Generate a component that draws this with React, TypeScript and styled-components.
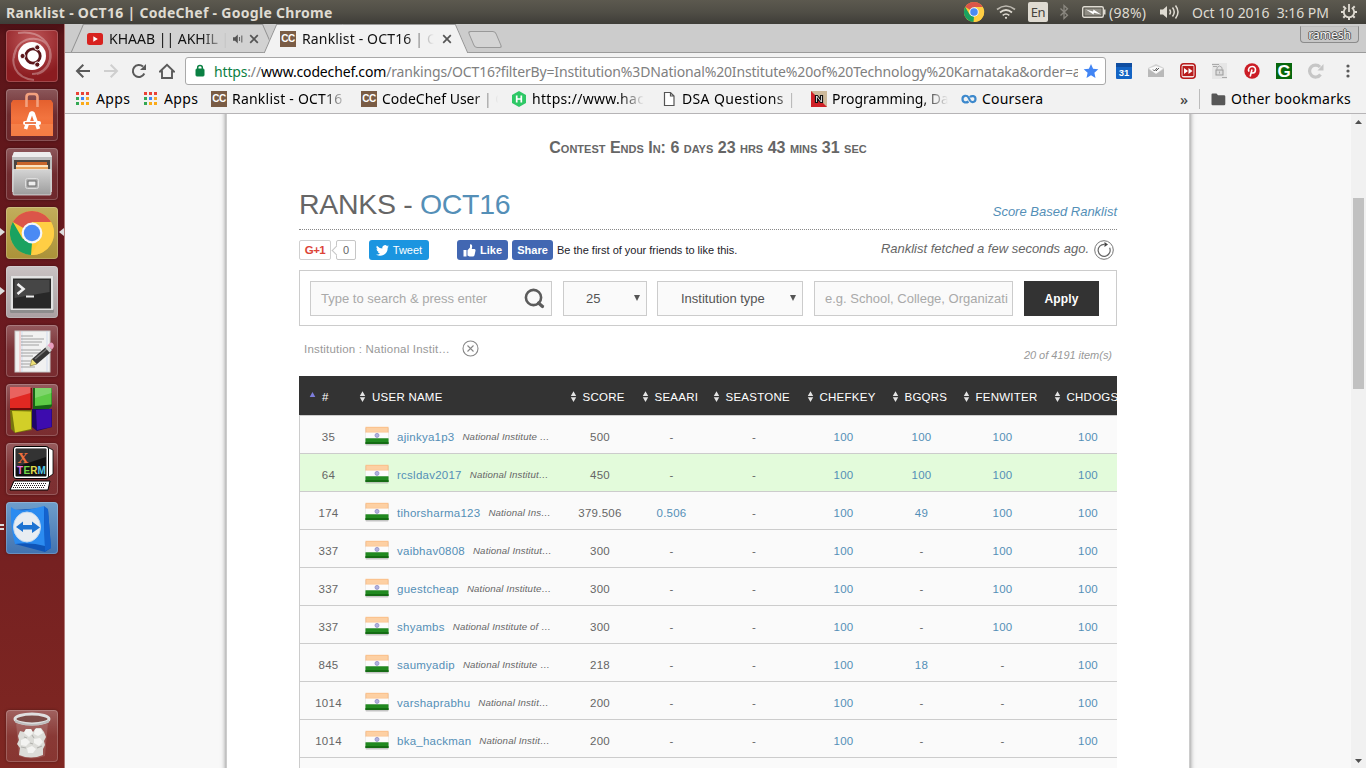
import React from "react";
import styled, { createGlobalStyle, css } from "styled-components";

const GlobalStyle = createGlobalStyle`
  * { box-sizing: border-box; }
  html, body { margin: 0; padding: 0; overflow: hidden; }
  svg { display: block; flex: none; }
`;

const ui = `"Noto Sans", "Open Sans", sans-serif`;
const arial = `"Liberation Sans", Arial, sans-serif`;

const Desktop = styled.div`
  width: 1366px;
  height: 768px;
  display: flex;
  flex-direction: column;
  overflow: hidden;
  font-family: ${ui};
`;

/* ---------- system panel ---------- */
const Panel = styled.header`
  height: 24px;
  flex: none;
  display: flex;
  align-items: center;
  justify-content: space-between;
  padding: 0 8px 0 6px;
  background: linear-gradient(#5c594f 0%, #504e46 50%, #3e3d38 100%);
  color: #dfdbd2;
  white-space: nowrap;
`;
const WindowTitle = styled.div`
  font-size: 14px;
  font-weight: 700;
  letter-spacing: 0.3px;
`;
const Indicators = styled.div`
  display: flex;
  align-items: center;
`;
const Indicator = styled.div<{ $w: number; $ls?: number }>`
  width: ${(p) => p.$w}px;
  flex: none;
  font-size: 14px;
  letter-spacing: ${(p) => p.$ls ?? 0}px;
`;
const Lang = styled.div`
  width: 20px;
  height: 20px;
  border-radius: 2px;
  background: #dfdbd2;
  color: #45433d;
  font-size: 13px;
  line-height: 20px;
  text-align: center;
  letter-spacing: -0.5px;
`;

/* ---------- launcher ---------- */
const Body = styled.div`
  flex: 1;
  display: flex;
  min-height: 0;
`;
const Launcher = styled.nav`
  width: 65px;
  flex: none;
  display: flex;
  flex-direction: column;
  gap: 7px;
  padding: 6px 6px 6px;
  background: linear-gradient(#4c1015 0, #5b1519 12px, #6d1b20 45%, #7f2722 100%);
  border-right: 1px solid #b07a78;
`;
const Tile = styled.div<{ $bg?: string; $last?: boolean }>`
  position: relative;
  width: 52px;
  height: 52px;
  flex: none;
  border-radius: 4px;
  background: ${(p) => p.$bg ?? "linear-gradient(rgba(255,255,255,.28), rgba(255,255,255,.09) 50%, rgba(255,255,255,.07))"};
  box-shadow: inset 0 0 0 1px rgba(255, 255, 255, 0.2), 0 0 3px rgba(0, 0, 0, 0.35);
  ${(p) => p.$last && css`margin-top: auto;`}
`;
const Pip = styled.i<{ $right?: boolean; $top?: number }>`
  position: absolute;
  top: ${(p) => p.$top ?? 21}px;
  ${(p) => (p.$right ? "right: -6px;" : "left: -6px;")}
  border: 4px solid transparent;
  ${(p) => (p.$right ? "border-right: 5px solid #ddd; border-left: 0;" : "border-left: 5px solid #ddd; border-right: 0;")}
`;
const Dash = styled.i<{ $top: number }>`
  position: absolute;
  left: -6px;
  top: ${(p) => p.$top}px;
  width: 4px;
  height: 2px;
  background: #ddd;
`;

/* ---------- browser chrome ---------- */
const Browser = styled.main`
  flex: 1;
  min-width: 0;
  display: flex;
  flex-direction: column;
  background: #f2f2f2;
`;
const TabStrip = styled.div`
  position: relative;
  height: 29px;
  flex: none;
  display: flex;
  padding-left: 12px;
  background: #ccc;
  border-bottom: 1px solid #9b9b9b;
`;
const Tab = styled.div<{ $active?: boolean }>`
  position: relative;
  width: 186px;
  height: ${(p) => (p.$active ? 29 : 28)}px;
  margin-right: 7px;
  display: flex;
  align-items: center;
  padding: 1px 4px 0 10px;
  z-index: ${(p) => (p.$active ? 2 : 1)};
  &::before, &::after {
    content: "";
    position: absolute;
    z-index: -1;
    top: 0;
    bottom: 0;
    width: 60%;
    background: ${(p) => (p.$active ? "#f2f2f2" : "#d2d2d2")};
    border-top: 1px solid #9b9b9b;
  }
  &::before { left: 0; border-left: 1.4px solid #8f8f8f; transform: skewX(-23.5deg); }
  &::after { right: -6px; border-right: 1.4px solid #8f8f8f; transform: skewX(23.5deg); }
`;
const TabTitle = styled.div<{ $w: number; $ls: number }>`
  width: ${(p) => p.$w}px;
  margin-left: 6px;
  font-size: 14px;
  line-height: 26px;
  letter-spacing: ${(p) => p.$ls}px;
  white-space: nowrap;
  overflow: hidden;
  color: #111;
  mask-image: linear-gradient(90deg, #000 78%, transparent 100%);
`;
const NewTab = styled.div`
  width: 28px;
  height: 17px;
  margin: 7px 0 0 8px;
  border: 1px solid #999;
  border-radius: 3px;
  background: #d4d4d4;
  transform: skewX(23deg);
`;
const Profile = styled.div`
  margin: 2px 7px 0 auto;
  width: 59px;
  height: 17px;
  border: 1px solid #8b8b8b;
  border-top-color: #bbb;
  border-radius: 0 0 4px 4px;
  background: #c6c6c6;
  color: #f4f4f4;
  font-size: 12.5px;
  line-height: 15px;
  letter-spacing: -0.3px;
  text-align: center;
  text-shadow: 1px 0 #555, -1px 0 #555, 0 1px #555, 0 -1px #555;
`;
const Toolbar = styled.div`
  height: 32px;
  flex: none;
  display: flex;
  align-items: center;
  padding: 4px 10px 0;
`;
const NavButtons = styled.div`
  display: flex;
  gap: 12px;
  margin-right: 10px;
`;
const Omnibox = styled.div`
  width: 921px;
  height: 28px;
  display: flex;
  align-items: center;
  padding: 0 6px 0 9px;
  border: 1px solid #a9a9a9;
  border-radius: 3px;
  background: #fff;
`;
const Url = styled.div`
  width: 864px;
  margin: 0 5px 0 9px;
  overflow: hidden;
  white-space: nowrap;
  font-size: 14px;
  letter-spacing: -0.16px;
  color: #808080;
  em { font-style: normal; color: #0b8043; }
  b { font-weight: 400; color: #000; }
`;
const Extensions = styled.div`
  display: flex;
  gap: 16px;
  margin-left: 10px;
`;
const BookmarkBar = styled.div`
  height: 29px;
  flex: none;
  display: flex;
  align-items: center;
  padding-left: 10px;
  border-bottom: 1px solid #b6b4b6;
`;
const Bookmark = styled.div<{ $w: number }>`
  width: ${(p) => p.$w}px;
  flex: none;
  display: flex;
  align-items: center;
  gap: 5px;
`;
const BookmarkLabel = styled.div<{ $fade?: boolean; $ls?: number }>`
  flex: 0 0 auto;
  overflow: hidden;
  white-space: nowrap;
  font-size: 14px;
  line-height: 20px;
  color: #000;
  letter-spacing: ${(p) => p.$ls ?? 0}px;
  ${(p) => p.$fade && css`max-width: 116px; mask-image: linear-gradient(90deg, #000 78%, transparent 100%);`}
`;
const More = styled.div`
  margin-left: 69px;
  width: 19px;
  font-size: 15px;
  font-weight: 500;
  color: #444;
  line-height: 20px;
`;
const OtherBookmarks = styled.div`
  display: flex;
  align-items: center;
  gap: 5px;
  padding-left: 11px;
  border-left: 1px solid #bcbcbc;
`;
const CCBadge = styled.span`
  width: 16px;
  height: 16px;
  flex: none;
  background: #7a5c45;
  color: #fff;
  font: 700 10px/15px ${arial};
  letter-spacing: -0.5px;
  text-align: center;
`;

/* ---------- page ---------- */
const Viewport = styled.div`
  flex: 1;
  min-height: 0;
  display: flex;
`;
const Canvas = styled.div`
  flex: 1;
  background: #f8f8f8;
  display: flex;
  justify-content: center;
  overflow: hidden;
`;
const Sheet = styled.div`
  width: 964px;
  height: 800px;
  margin-top: -10px;
  padding: 10px 72px 0;
  border: 1px solid #ccc;
  background: #fff;
  box-shadow: 0 0 5px #777;
  font-family: ${arial};
  color: #666;
`;
const Scrollbar = styled.div`
  width: 15px;
  display: flex;
  flex-direction: column;
  align-items: center;
  background: #f1f1f1;
  padding: 6px 0 5px;
`;
const Thumb = styled.div`
  width: 11px;
  height: 191px;
  margin: 74px 0 auto;
  background: #c1c1c1;
`;
const Countdown = styled.div`
  padding-top: 23px;
  height: 64px;
  font-size: 16px;
  line-height: 20px;
  font-weight: 700;
  font-variant: small-caps;
  text-align: center;
  white-space: nowrap;
`;
const TitleRow = styled.div`
  height: 51px;
  display: flex;
  justify-content: space-between;
  border-bottom: 1px dotted #888;
`;
const Title = styled.h1`
  margin: 8px 0 0;
  font-size: 28.500px;
  line-height: 34px;
  font-weight: 400;
  letter-spacing: -0.32px;
  white-space: nowrap;
  span { color: #548fb7; }
`;
const ScoreLink = styled.a`
  margin-top: 25px;
  font-size: 13px;
  line-height: 15px;
  font-style: italic;
  color: #548fb7;
`;
const SocialRow = styled.div`
  display: flex;
  height: 40px;
  padding-top: 10px;
  align-items: flex-start;
`;
const GPlus = styled.div`
  width: 32px;
  height: 20px;
  border: 1px solid #d0d0d0;
  border-radius: 2px;
  color: #dc4437;
  font: 700 11.5px/18px ${arial};
  letter-spacing: -0.6px;
  text-align: center;
`;
const GCount = styled.div`
  position: relative;
  width: 20px;
  height: 20px;
  margin: 0 13px 0 5px;
  border: 1px solid #c6c6c6;
  border-radius: 2px;
  font-size: 11px;
  line-height: 19px;
  text-align: center;
  &::before {
    content: "";
    position: absolute;
    left: -4px;
    top: 6px;
    width: 6px;
    height: 6px;
    background: #fff;
    border-left: 1px solid #c6c6c6;
    border-bottom: 1px solid #c6c6c6;
    transform: rotate(45deg);
  }
`;
const SocialButton = styled.div<{ $w: number; $bg: string; $mr: number; $bold?: boolean }>`
  width: ${(p) => p.$w}px;
  height: 20px;
  margin-right: ${(p) => p.$mr}px;
  display: flex;
  align-items: center;
  justify-content: center;
  gap: 4px;
  border-radius: 3px;
  background: ${(p) => p.$bg};
  color: #fff;
  font-size: 11px;
  font-weight: ${(p) => (p.$bold ? 700 : 400)};
  line-height: 20px;
`;
const SocialNote = styled.div`
  font-size: 11px;
  line-height: 21px;
  color: #1d2129;
  white-space: nowrap;
`;
const Fetched = styled.div`
  margin-left: auto;
  padding-right: 3px;
  display: flex;
  gap: 5px;
  font-size: 13px;
  line-height: 18px;
  font-style: italic;
  white-space: nowrap;
`;
const Filters = styled.div`
  height: 56px;
  display: grid;
  grid-template-columns: 242px 84px 145px 199px 75px;
  column-gap: 11px;
  padding: 10px;
  border: 1px solid #ccc;
`;
const Field = styled.div<{ $hint?: boolean; $wide?: boolean }>`
  height: 35px;
  display: flex;
  align-items: center;
  justify-content: space-between;
  padding: 0 6px 0 10px;
  border: 1px solid #ccc;
  background: #fafafa;
  font-size: 13px;
  white-space: nowrap;
  overflow: hidden;
  color: ${(p) => (p.$hint ? "#a9a9a9" : "#555")};
  ${(p) => p.$wide && css`margin-left: -1px;`}
`;
const Clip = styled.span`
  width: 183px;
  flex: none;
  overflow: hidden;
`;
const Choice = styled.span<{ $pl: number }>`
  padding-left: ${(p) => p.$pl}px;
`;
const Caret = styled.i`
  border: 3.5px solid transparent;
  border-top: 6px solid #555;
  border-bottom: 0;
  margin-top: -2px;
`;
const Apply = styled.div`
  height: 35px;
  background: #333;
  color: #fff;
  font: 700 12px/37px ${arial};
  letter-spacing: 0.15px;
  text-align: center;
`;
const Summary = styled.div`
  height: 50px;
  display: flex;
  justify-content: space-between;
  padding: 13px 5px 0 5px;
`;
const ActiveFilter = styled.div`
  display: flex;
  gap: 12px;
  font-size: 11.5px;
  line-height: 20px;
  color: #999;
  letter-spacing: 0.2px;
  svg { margin-top: 1px; }
`;
const ItemCount = styled.div`
  margin-top: 9px;
  font-size: 11px;
  line-height: 14px;
  font-style: italic;
  color: #999;
  letter-spacing: -0.03px;
`;
const Table = styled.div`
  width: 818px;
  overflow: hidden;
  font-size: 11.5px;
  letter-spacing: 0.25px;
`;
const gridRow = css`
  display: grid;
  grid-template-columns: 54px 210px 72px 71px 94px 85px 71px 91px 80px;
  width: 829px;
  align-items: center;
`;
const HeadRow = styled.div`
  ${gridRow}
  height: 39px;
  padding: 3px 0 0 1px;
  background: #333;
  color: #fff;
`;
const HeadCell = styled.div<{ $pl?: number }>`
  display: flex;
  align-items: center;
  gap: 6px;
  padding-left: ${(p) => p.$pl ?? 5.5}px;
  white-space: nowrap;
  svg { margin-top: -1px; }
`;
const BodyRows = styled.div`
  width: 829px;
  border-left: 1px solid #ccc;
  border-top: 1px solid #ccc;
`;
const Row = styled.div<{ $mine?: boolean }>`
  ${gridRow}
  height: 38px;
  padding-top: 4px;
  border-bottom: 1px solid #ccc;
  background: ${(p) => (p.$mine ? "#e3fbdb" : "#fafafa")};
`;
const Cell = styled.div<{ $link?: boolean; $pl?: number }>`
  text-align: center;
  padding-left: ${(p) => p.$pl ?? 0}px;
  color: ${(p) => (p.$link ? "#548fb7" : "#666")};
`;
const UserCell = styled.div`
  display: flex;
  align-items: center;
  gap: 8px;
  padding-left: 11px;
  white-space: nowrap;
  color: #548fb7;
  svg { margin: -1px 0 1px; }
  em { font-size: 9.7px; letter-spacing: 0.13px; color: #666; }
`;

/* ---------- drawings ---------- */
const ChromeLogo = ({ size }: { size: number }) => (
  <svg width={size} height={size} viewBox="0 0 48 48">
    <circle cx="24" cy="24" r="22" fill="#fc3" />
    <path d="M24 24 4.9 13A22 22 0 0 1 43 13H24z" fill="#db5549" />
    <path d="M4.9 13 14.5 29.5 24 34 23 46A22 22 0 0 1 4.9 13z" fill="#1aa260" />
    <path d="M24 34 33.5 29.5 43.1 13H24l9.5 16L23 46A22 22 0 0 0 43.1 13z" fill="#ffce44" />
    <circle cx="24" cy="24" r="10.4" fill="#f4f6fa" />
    <circle cx="24" cy="24" r="8.2" fill="#4a8af4" />
  </svg>
);

const Flag = () => (
  <svg width="24" height="20" viewBox="0 0 24 20">
    <rect x="0.5" y="1.5" width="23" height="18" rx="1" fill="#999" opacity=".55" />
    <rect x="0.5" y="0.8" width="23" height="6.4" fill="#fbc08a" />
    <rect x="1.5" y="1.8" width="21" height="4" fill="#fdd0a3" />
    <rect x="0.5" y="6.5" width="23" height="6" fill="#fcfcfc" />
    <rect x="0.5" y="12.3" width="23" height="5.7" fill="#218a20" />
    <rect x="0.5" y="16" width="23" height="2" fill="#156c14" />
    <circle cx="12" cy="9.4" r="2" fill="#b3b3dd" stroke="#8d8dc8" strokeWidth=".8" />
  </svg>
);

const SortIcon = () => (
  <svg width="7" height="11" viewBox="0 0 7 11">
    <path d="M.8 5 3.500 0.200 6.200 5zM.8 6.200h5.400L3.500 11z" fill="#e4e4e4" />
  </svg>
);

const AppsGrid = () => (
  <svg width="16" height="16" viewBox="0 0 16 16">
    {["#ea4335", "#ea4335", "#ea4335", "#34a853", "#4285f4", "#f4a72a", "#34a853", "#fbab18", "#fbab18"].map((c, i) => (
      <rect key={i} x={1 + (i % 3) * 5} y={1 + Math.floor(i / 3) * 5} width="3" height="3" fill={c} />
    ))}
  </svg>
);

const Close = () => (
  <svg width="10" height="10" viewBox="0 0 10 10">
    <path d="M1.200 1.200l7.600 7.600M8.800 1.200 1.200 8.800" stroke="#555" strokeWidth="1.700" />
  </svg>
);

const UbuntuIcon = () => (
  <svg width="52" height="52" viewBox="0 0 52 52">
    <g fill="none" stroke="#fff" strokeWidth="2" opacity=".3">
      <path d="M8 28C8 6 38 2 44 20c3 12-4 22-13 24" />
      <path d="M12 3c22-3 34 10 32 26-2 10-10 15-18 15" />
      <path d="M28 50C8 48 4 32 10 20" />
    </g>
    <circle cx="26" cy="26" r="14" fill="#fff" />
    <circle cx="27" cy="26" r="7.2" fill="none" stroke="#5b161a" strokeWidth="2.8" />
    {[[16.6, 26], [31.3, 17.4], [31.3, 34.6]].map(([x, y]) => (
      <circle key={x + "-" + y} cx={x} cy={y} r="2.6" fill="#5b161a" stroke="#fff" strokeWidth="1" />
    ))}
  </svg>
);

const BagIcon = () => (
  <svg width="52" height="52" viewBox="0 0 52 52">
    <defs>
      <linearGradient id="bag" x2="0" y2="1"><stop stopColor="#e4602e" /><stop offset=".5" stopColor="#f2743f" /><stop offset="1" stopColor="#f0672c" /></linearGradient>
    </defs>
    <path d="M7 11h38l2 3v33H5V14z" fill="url(#bag)" />
    <path d="M5 35h42v12H5z" fill="#f98b53" opacity=".6" />
    <path d="M20.500 18V8q0-3 3-3h5q3 0 3 3v10" fill="none" stroke="#f3a17e" strokeWidth="2.600" />
    <path d="M19.500 40 25 24h2l5.500 16" fill="none" stroke="#fff" strokeWidth="3.600" strokeLinejoin="bevel" />
    <rect x="17" y="32" width="18" height="4" rx="2" fill="#fff" />
    <rect x="19" y="33.200" width="11" height="1.600" fill="#e8622c" />
  </svg>
);

const FilesIcon = () => (
  <svg width="52" height="52" viewBox="0 0 52 52">
    <defs>
      <linearGradient id="cab" x2="0" y2="1"><stop stopColor="#d4d4d4" /><stop offset="1" stopColor="#9c9c9c" /></linearGradient>
    </defs>
    <path d="M8 4h36l2 5v35H6V9z" fill="#bdbdbd" />
    <path d="M8 4h36l2 5H6z" fill="#ededed" />
    <rect x="8" y="12" width="36" height="10" fill="#4a4541" />
    <path d="M11 14h30v7H11z" fill="#c8652a" />
    <path d="M10 17h32v4H10z" fill="#fbe3c0" />
    <path d="M10 19h32v3H10z" fill="#e9a45c" />
    <rect x="7" y="21.500" width="38" height="25.500" rx="1" fill="url(#cab)" stroke="#efefef" strokeWidth=".7" />
    <rect x="19.500" y="30.500" width="13" height="10" rx="2" fill="#b2b2b2" stroke="#dedede" strokeWidth="1" />
    <rect x="22" y="33" width="8" height="5" fill="#eee" stroke="#666" strokeWidth="1" />
  </svg>
);

const TerminalIcon = () => (
  <svg width="52" height="52" viewBox="0 0 52 52">
    <rect x="4" y="10" width="44" height="37" rx="1.500" fill="#8d8d8d" />
    <rect x="4.500" y="10" width="43" height="34" rx="1" fill="#e2e2e2" />
    <rect x="7" y="12.500" width="38" height="30" fill="#282828" />
    <path d="M8.500 14h35v12l-35 6z" fill="#464646" />
    <path d="M11.500 18l6 5-6 5" fill="none" stroke="#eee" strokeWidth="2.600" />
    <path d="M20 30.500h8" stroke="#eee" strokeWidth="2" />
  </svg>
);

const EditorIcon = () => (
  <svg width="52" height="52" viewBox="0 0 52 52">
    <rect x="9" y="6" width="35" height="41" fill="#f1f1f1" stroke="#c8c8c8" strokeWidth="1" />
    <path d="M14 6v41" stroke="#f2a6a6" strokeWidth=".8" />
    <path d="M16 6v41M41 6v41" stroke="#c4d3ec" strokeWidth=".7" />
    {[11, 14, 17, 20, 25, 28, 31, 36, 39, 42].map((y, i) => (
      <path key={y} d={`M15 ${y}h${[12, 23, 21, 18, 20, 19, 12, 12, 9, 14][i]}`} stroke="#999" strokeWidth=".9" />
    ))}
    <path d="M24 41l2-7 5 5z" fill="#ecdf76" stroke="#5c5020" strokeWidth=".5" />
    <path d="M26 34 40 22l5 5-14 12z" fill="#363636" />
    <path d="M29 34 42 23" stroke="#777" strokeWidth="1.500" />
    <path d="M39 22.500l2.500-2 4.500 4.500-2.500 2.500z" fill="#d0d0d0" />
    <path d="M41.500 20.500q3-4 5-2.500 3 3-.5 6.500z" fill="#e9a0c0" />
  </svg>
);

const BlocksIcon = () => (
  <svg width="52" height="52" viewBox="0 0 52 52">
    <path d="M4 4h22v21l-3 3H4z" fill="#6d0c0c" />
    <rect x="4" y="3" width="20.500" height="21" fill="#e12822" />
    <path d="M27 4h19v18l-3 3H27z" fill="#166414" />
    <path d="M29 4h16.500v16.500L29 22z" fill="#5ecb46" />
    <path d="M4 26h22v20L9 49l-4-4z" fill="#77760e" />
    <path d="M6 27l19 .5V45L9 48.500z" fill="#d2cf28" />
    <path d="M26 25h20v18l-15 4-5-4z" fill="#1e0668" />
    <path d="M30 26l15.500-1V43L31 46z" fill="#3d0cae" />
    <path d="M4 3h20.500v6L4 15z" fill="#fff" opacity=".28" />
    <path d="M29 4h16.500v5L29 14z" fill="#fff" opacity=".2" />
  </svg>
);

const XtermIcon = () => (
  <svg width="52" height="52" viewBox="0 0 52 52">
    <path d="M41 4l6 3v24l-7 5z" fill="#fff" stroke="#000" strokeWidth=".8" />
    <rect x="7.500" y="3.500" width="35" height="32" rx="2.500" fill="#fff" stroke="#000" strokeWidth="1" />
    <rect x="9.500" y="5.500" width="31" height="28" rx="1" fill="#111" />
    <path d="M10 6h30v8l-30 10z" fill="#333" />
    <text x="11.500" y="20" fontFamily="Liberation Serif" fontSize="15" fontWeight="700" fill="#f0703c">X</text>
    <g fontFamily="Liberation Sans" fontSize="10" fontWeight="700">
      <text x="11" y="31" fill="#ea70e0">T</text>
      <text x="17.500" y="31" fill="#74d848">E</text>
      <text x="24.300" y="31" fill="#e0dc4c">R</text>
      <text x="31.500" y="31" fill="#55c8ea">M</text>
    </g>
    <path d="M8 38h36l-2 9H4z" fill="#fff" stroke="#000" strokeWidth="1" />
    {[40.500, 42.500, 44.500].map((y, i) => (
      <path key={y} d={`M${9 - i} ${y}h31`} stroke="#222" strokeWidth="1" strokeDasharray="1 1" />
    ))}
  </svg>
);

const TeamViewerIcon = () => (
  <svg width="52" height="52" viewBox="0 0 52 52">
    <path d="M8 8l30-2 4 2 3 38-6 4-30-8z" fill="#0f55b8" />
    <path d="M5 5q4 4 14 3 9-1 19-4 0 22 1 40-14-4-30-2-5-18-4-37z" fill="#2b8bf0" />
    <path d="M38 4l4 3 3 39-6 3z" fill="#1463cf" />
    <ellipse cx="21" cy="25" rx="13.500" ry="15" fill="#e8edf2" stroke="#c2d8ee" strokeWidth="1" />
    <path d="M10 25l7-5.500v3.500h9v-3.500l8 6-8 5.500v-3.500h-9V30z" fill="#1d73d2" />
  </svg>
);

const TrashIcon = () => (
  <svg width="52" height="52" viewBox="0 0 52 52">
    <path d="M10 12h32l-3 34q-13 5-26 0z" fill="#fff" opacity=".14" />
    <path d="M12 26l2-5 4 1 2-3h5l2 3 3-4h5l3 4 2 5-2 4 1 4-2 4v6q-12 5-24 0l1-7-3-4 2-4z" fill="#dcdcd8" />
    <path d="M20 19h5l2 4-4 4-5-4zM29 19h6l2 4-5 3-4-2zM15 30l5-2 4 4-4 4-5-1zM28 29l6-1 3 4-4 4-5-3zM21 38l5-2 4 3-3 4h-5z" fill="#f3f3f1" />
    <path d="M18 27l3 1M26 25l2 3M15 37l5 1M31 38l5-2M24 33l3 1" stroke="#b2b2ae" strokeWidth="1.200" />
    <ellipse cx="26" cy="9" rx="17" ry="5" fill="#7c4c48" stroke="#dfdfdf" strokeWidth="3" />
    <path d="M9 10q17 8 34 0v2.500q-17 6-34 0z" fill="#bdbdbd" />
  </svg>
);

const Wifi = () => (
  <svg width="20" height="16" viewBox="0 0 20 16" fill="none" stroke="#dfdbd2" strokeWidth="1.700">
    <path d="M1 5.500q9-7 18 0" opacity=".75" /><path d="M4 8.500q6-5 12 0" /><path d="M6.700 11.300q3.300-2.600 6.600 0" />
    <circle cx="10" cy="13.800" r="1.100" fill="#dfdbd2" stroke="none" />
  </svg>
);
const Bluetooth = () => (
  <svg width="10" height="16" viewBox="0 0 10 16">
    <path d="M1.500 4.500l7 6.800L5 14.500V1.500l3.500 3.200-7 6.800" fill="none" stroke="#8b8880" strokeWidth="1.300" />
  </svg>
);
const Battery = () => (
  <svg width="24" height="12" viewBox="0 0 24 12">
    <rect x=".7" y=".7" width="20.600" height="10.600" rx="1.500" fill="none" stroke="#dfdbd2" strokeWidth="1.400" />
    <rect x="2.500" y="2.500" width="17" height="7" fill="#908d84" />
    <rect x="21.500" y="3.500" width="2" height="5" fill="#dfdbd2" />
    <path d="M4 3.500l7 2L11.500 3.500 19 8.500l-7-1.800-.5 1.800z" fill="#fff" />
  </svg>
);
const Volume = () => (
  <svg width="20" height="16" viewBox="0 0 20 16">
    <path d="M0 5.500h3l4-3.500v12l-4-3.500H0z" fill="#dfdbd2" />
    <path d="M9.500 5.500q2 2.500 0 5M12.500 3.500q3.500 4.500 0 9M15.500 1.500q5 6.500 0 13" fill="none" stroke="#dfdbd2" strokeWidth="1.500" />
  </svg>
);
const PowerCog = () => (
  <svg width="18" height="18" viewBox="0 0 18 18" fill="none" stroke="#dfdbd2">
    <path d="M6.200 4.800A5.200 5.200 0 1 0 11.800 4.800" strokeWidth="1.800" />
    <path d="M9 1v8" strokeWidth="1.800" />
    <path d="M1 9h2.500M14.500 9H17M3.300 14.700l1.900-1.900M14.700 14.700l-1.900-1.900M9 14.500V17M3.300 3.300l1.800 1.800M14.700 3.300l-1.800 1.800" strokeWidth="2" />
  </svg>
);

const YouTube = () => (
  <svg width="16" height="16" viewBox="0 0 16 16">
    <rect x="0" y="2" width="16" height="12" rx="2.500" fill="#d8221f" /><path d="M6.300 5.300v5.400L10.800 8z" fill="#fff" />
  </svg>
);
const TabSpeaker = () => (
  <svg width="10" height="10" viewBox="0 0 10 10">
    <path d="M0 3.200h2L4.800.5v9L2 6.800H0z" fill="#555" /><path d="M6.500 3v4M8.800 1.500v7" stroke="#666" strokeWidth="1.100" />
  </svg>
);
const HackerRank = () => (
  <svg width="16" height="16" viewBox="0 0 16 16">
    <path d="M8 0l7 4v8l-7 4-7-4V4z" fill="#2ec866" />
    <path d="M5.700 4.500v7M10.300 4.500v7M5.700 8h4.600" stroke="#fff" strokeWidth="1.700" />
  </svg>
);
const FileGlyph = () => (
  <svg width="16" height="16" viewBox="0 0 16 16">
    <path d="M3.500 1.500h6l3.500 3.500v9.500H3.500zM9.500 1.500V5H13" fill="#fff" stroke="#555" strokeWidth="1.200" />
  </svg>
);
const NGlyph = () => (
  <svg width="16" height="16" viewBox="0 0 16 16">
    <rect width="16" height="16" fill="#cdb99a" /><path d="M0 0v16h16z" fill="#cf2026" />
    <path d="M4.500 11.500v-7h2l3 4v-4h2v7h-2l-3-4v4z" fill="#fff" stroke="#111" strokeWidth="1.200" />
  </svg>
);
const CourseraGlyph = () => (
  <svg width="16" height="16" viewBox="0 0 16 16">
    <path d="M7.500 10.500C5.500 12 1.500 12 1.500 8s4.500-4 6-1.500l1.500 3c1.500 2.500 5.500 2 5.500-1.500S10.500 4.500 8.800 6" fill="none" stroke="#3c88cc" strokeWidth="2.200" />
  </svg>
);
const FolderGlyph = () => (
  <svg width="15" height="13" viewBox="0 0 15 13">
    <path d="M.5 1.500Q.5.500 1.500.500h4L7 2.300h6q1.300 0 1.300 1.200v7.500q0 1.200-1.200 1.200H1.600Q.5 12.200.5 11z" fill="#575757" />
  </svg>
);

const BackArrow = ({ color }: { color: string }) => (
  <svg width="16" height="16" viewBox="0 0 16 16" fill="none" stroke={color} strokeWidth="2">
    <path d="M15 8H2.500M8.300 1.700 2 8l6.300 6.300" />
  </svg>
);
const ForwardArrow = () => (
  <svg width="16" height="16" viewBox="0 0 16 16" fill="none" stroke="#cfcfcf" strokeWidth="2">
    <path d="M1 8h12.500M7.700 1.700 14 8l-6.300 6.300" />
  </svg>
);
const Reload = () => (
  <svg width="16" height="16" viewBox="0 0 16 16">
    <path d="M13.300 10.500A6 6 0 1 1 12 3.600" fill="none" stroke="#5a5a5a" strokeWidth="2" /><path d="M15 1v6H9z" fill="#5a5a5a" />
  </svg>
);
const Home = () => (
  <svg width="16" height="16" viewBox="0 0 16 16">
    <path d="M1 8.500 8 1.700l7 6.800h-2V15H3V8.500z" fill="none" stroke="#5a5a5a" strokeWidth="1.900" />
  </svg>
);
const Lock = () => (
  <svg width="10" height="14" viewBox="0 0 10 14">
    <rect x="1" y="5" width="8" height="7" rx=".8" fill="#0b8043" stroke="#0b8043" /><path d="M2.700 6V3.500q0-2 2.300-2t2.300 2V6" fill="none" stroke="#0b8043" strokeWidth="1.500" />
  </svg>
);
const Star = () => (
  <svg width="16" height="16" viewBox="0 0 16 16">
    <path d="M8 1l2.100 4.800 5.200.5-3.900 3.500L12.500 15 8 12.300 3.500 15l1.100-5.200L.7 6.300l5.200-.5z" fill="#4285f4" />
  </svg>
);

const CalendarExt = () => (
  <svg width="16" height="16" viewBox="0 0 16 16">
    <rect width="16" height="16" rx="1" fill="#1464c4" /><rect width="16" height="4" fill="#0f4da0" />
    <text x="8" y="12.700" textAnchor="middle" fontFamily="Liberation Sans" fontSize="9.500" fontWeight="700" fill="#fff">31</text>
  </svg>
);
const MailExt = () => (
  <svg width="16" height="16" viewBox="0 0 16 16">
    <path d="M0 5l8-4 8 4v9H0z" fill="#d2d2d2" /><path d="M1 5.500 8 3l7 2.500L8 11z" fill="#fafafa" /><path d="M0 6l8 5 8-5v8H0z" fill="#b9b9b9" />
    <path d="M5 6.500l1.500 1.500L9 5M8 8l3-3" fill="none" stroke="#555" strokeWidth="1" />
  </svg>
);
const ForwardExt = () => (
  <svg width="16" height="16" viewBox="0 0 16 16">
    <rect x=".8" y=".8" width="14.400" height="14.400" rx="3" fill="#f4e4e4" stroke="#b81c1c" strokeWidth="1.600" />
    <rect x="2.500" y="3" width="11" height="10" fill="#b81c1c" /><path d="M4 5l4 3-4 3zM8.500 5l4 3-4 3z" fill="#fff" />
  </svg>
);
const LockExt = () => (
  <svg width="16" height="16" viewBox="0 0 16 16">
    <rect width="15" height="16" fill="#e6e6e6" /><path d="M0 1.500h7M10 14.500h5M1 3.500h4" stroke="#aaa" />
    <rect x="4" y="7" width="7" height="5" fill="#ddd" stroke="#999" /><path d="M5 7V4.500q2.500-3 5 0V7M7.500 8.500v2" fill="none" stroke="#aaa" strokeWidth="1" />
  </svg>
);
const PinterestExt = () => (
  <svg width="16" height="16" viewBox="0 0 16 16">
    <circle cx="8" cy="8" r="7.700" fill="#cb1d26" />
    <path d="M6.200 13.500 8 6.500M5 8.700C3.500 6 5.500 3.500 8.300 3.500c4.500 0 3.700 6.500.7 6.500-1 0-1.600-.7-1.700-1.200" fill="none" stroke="#fff" strokeWidth="1.600" />
  </svg>
);
const GrammarExt = () => (
  <svg width="16" height="16" viewBox="0 0 16 16">
    <rect width="16" height="16" fill="#07670c" />
    <text x="8" y="14" textAnchor="middle" fontFamily="Liberation Sans" fontSize="17" fontWeight="700" fill="#fff">G</text>
  </svg>
);
const CExt = () => (
  <svg width="16" height="16" viewBox="0 0 16 16">
    <path d="M12.500 11.500A6 6 0 1 1 12 4" fill="none" stroke="#c6c6c6" strokeWidth="3.200" /><path d="M15.500 1v6.500H9.500z" fill="#c6c6c6" />
  </svg>
);
const Dots = () => (
  <svg width="16" height="16" viewBox="0 0 16 16" fill="#5a5a5a">
    <circle cx="8" cy="3" r="1.600" /><circle cx="8" cy="8" r="1.600" /><circle cx="8" cy="13" r="1.600" />
  </svg>
);

const Bird = () => (
  <svg width="13" height="11" viewBox="0 0 24 20">
    <path d="M24 2.400a10 10 0 0 1-2.800.8A5 5 0 0 0 23.300.500a10 10 0 0 1-3.100 1.200A4.900 4.900 0 0 0 11.800 6.200 14 14 0 0 1 1.700 1a4.900 4.900 0 0 0 1.500 6.600A5 5 0 0 1 1 7v.1a4.900 4.900 0 0 0 3.900 4.800 5 5 0 0 1-2.200.1 4.900 4.900 0 0 0 4.600 3.400A10 10 0 0 1 0 17.500 14 14 0 0 0 21.500 5z" fill="#fff" />
  </svg>
);
const Thumbs = () => (
  <svg width="13" height="13" viewBox="0 0 13 13">
    <path d="M.5 6h3v6.500h-3zM4.500 6.300 7 3.500V.8Q7 0 8 .3q1.200.5 1.200 2L8.800 5h2.700q1.300.3 1 1.700l-1 4.600q-.4 1.200-1.700 1.200H6.500l-2-1z" fill="#fff" />
  </svg>
);
const Search = () => (
  <svg width="21" height="21" viewBox="0 0 21 21">
    <circle cx="9.500" cy="9.500" r="7.600" fill="none" stroke="#5c5c5c" strokeWidth="2.600" /><path d="M14.500 15l4 3.500" stroke="#5c5c5c" strokeWidth="3.200" strokeLinecap="round" />
  </svg>
);
const Refresh = () => (
  <svg width="20" height="20" viewBox="0 0 20 20">
    <circle cx="10" cy="10" r="9.300" fill="none" stroke="#777" />
    <path d="M15.600 7.800A6 6 0 1 1 10.500 4.300" fill="none" stroke="#666" strokeWidth="1.200" /><path d="M10.500 2 14 4.500 10.500 7z" fill="#444" />
  </svg>
);
const ClearIcon = () => (
  <svg width="17" height="17" viewBox="0 0 17 17" fill="none" stroke="#888">
    <circle cx="8.500" cy="8.500" r="7.500" strokeWidth="1.100" /><path d="M5.500 5.500l6 6M11.500 5.500l-6 6" strokeWidth="1.100" />
  </svg>
);

/* ---------- data ---------- */
type Entry = { rank: string; user: string; inst: string; scores: string[]; mine?: boolean };
const entries: Entry[] = [
  { rank: "35", user: "ajinkya1p3", inst: "National Institute …", scores: ["500", "-", "-", "100", "100", "100", "100"] },
  { rank: "64", user: "rcsldav2017", inst: "National Institut…", scores: ["450", "-", "-", "100", "100", "100", "100"], mine: true },
  { rank: "174", user: "tihorsharma123", inst: "National Ins…", scores: ["379.506", "0.506", "-", "100", "49", "100", "100"] },
  { rank: "337", user: "vaibhav0808", inst: "National Institut…", scores: ["300", "-", "-", "100", "-", "100", "100"] },
  { rank: "337", user: "guestcheap", inst: "National Institute…", scores: ["300", "-", "-", "100", "-", "100", "100"] },
  { rank: "337", user: "shyambs", inst: "National Institute of …", scores: ["300", "-", "-", "100", "-", "100", "100"] },
  { rank: "845", user: "saumyadip", inst: "National Institute …", scores: ["218", "-", "-", "100", "18", "-", "100"] },
  { rank: "1014", user: "varshaprabhu", inst: "National Instit…", scores: ["200", "-", "-", "100", "-", "-", "100"] },
  { rank: "1014", user: "bka_hackman", inst: "National Instit…", scores: ["200", "-", "-", "100", "-", "-", "100"] },
];
const problems = ["SCORE", "SEAARI", "SEASTONE", "CHEFKEY", "BGQRS", "FENWITER", "CHDOGS"];

const bookmarks = [
  { icon: <CCBadge>CC</CCBadge>, label: "Ranklist - OCT16 |", ls: 0.22 },
  { icon: <CCBadge>CC</CCBadge>, label: "CodeChef User | C", ls: 0 },
  { icon: <HackerRank />, label: "https://www.hac", ls: 0.3 },
  { icon: <FileGlyph />, label: "DSA Questions | C", ls: 0.35 },
  { icon: <NGlyph />, label: "Programming, Da", ls: 0 },
];

const TabIcons = styled.div`
  margin-left: auto;
  display: flex;
  gap: 6px;
`;
const ChromeCenter = styled.div`
  width: 52px;
  height: 52px;
  padding: 2px;
`;

export default function App() {
  return (
    <Desktop>
      <GlobalStyle />
      <Panel>
        <WindowTitle>Ranklist - OCT16 | CodeChef - Google Chrome</WindowTitle>
        <Indicators>
          <Indicator $w={33}><ChromeLogo size={22} /></Indicator>
          <Indicator $w={32}><Wifi /></Indicator>
          <Indicator $w={31}><Lang>En</Lang></Indicator>
          <Indicator $w={23}><Bluetooth /></Indicator>
          <Indicator $w={27}><Battery /></Indicator>
          <Indicator $w={51} $ls={0.25}>(98%)</Indicator>
          <Indicator $w={32}><Volume /></Indicator>
          <Indicator $w={148} $ls={-0.05}>Oct 10 2016&nbsp; 3:16 PM</Indicator>
          <PowerCog />
        </Indicators>
      </Panel>
      <Body>
        <Launcher>
          <Tile $bg="radial-gradient(circle at 50% 20%, #c0585a, #8b1c20 75%)"><UbuntuIcon /></Tile>
          <Tile><BagIcon /></Tile>
          <Tile><FilesIcon /></Tile>
          <Tile $bg="linear-gradient(#c2ad5c, #ab9238)"><ChromeCenter><ChromeLogo size={48} /></ChromeCenter><Pip /><Pip $right /></Tile>
          <Tile $bg="linear-gradient(#c9c2c3, #aaa0a2)"><TerminalIcon /><Pip /></Tile>
          <Tile><EditorIcon /></Tile>
          <Tile><BlocksIcon /></Tile>
          <Tile><XtermIcon /></Tile>
          <Tile $bg="linear-gradient(#6f9ecb, #4273b0)"><TeamViewerIcon /><Dash $top={22} /><Dash $top={26} /></Tile>
          <Tile $last><TrashIcon /></Tile>
        </Launcher>
        <Browser>
          <TabStrip>
            <Tab>
              <YouTube />
              <TabTitle $w={118} $ls={0}>KHAAB || AKHIL ||</TabTitle>
              <TabIcons><TabSpeaker /><Close /></TabIcons>
            </Tab>
            <Tab $active>
              <CCBadge>CC</CCBadge>
              <TabTitle $w={132} $ls={0.15}>Ranklist - OCT16 | C</TabTitle>
              <TabIcons><Close /></TabIcons>
            </Tab>
            <NewTab />
            <Profile>ramesh</Profile>
          </TabStrip>
          <Toolbar>
            <NavButtons><BackArrow color="#5a5a5a" /><ForwardArrow /><Reload /><Home /></NavButtons>
            <Omnibox>
              <Lock />
              <Url><em>https</em>://<b>www.codechef.com</b>/rankings/OCT16?filterBy=Institution%3DNational%20Institute%20of%20Technology%20Karnataka&amp;order=a</Url>
              <Star />
            </Omnibox>
            <Extensions>
              <CalendarExt /><MailExt /><ForwardExt /><LockExt /><PinterestExt /><GrammarExt /><CExt /><Dots />
            </Extensions>
          </Toolbar>
          <BookmarkBar>
            <Bookmark $w={68}><AppsGrid /><BookmarkLabel $ls={0.4}>Apps</BookmarkLabel></Bookmark>
            <Bookmark $w={68}><AppsGrid /><BookmarkLabel $ls={0.4}>Apps</BookmarkLabel></Bookmark>
            {bookmarks.map((b) => (
              <Bookmark key={b.label} $w={150}>{b.icon}<BookmarkLabel $fade $ls={b.ls}>{b.label}</BookmarkLabel></Bookmark>
            ))}
            <Bookmark $w={150}><CourseraGlyph /><BookmarkLabel $ls={0.2}>Coursera</BookmarkLabel></Bookmark>
            <More>»</More>
            <OtherBookmarks><FolderGlyph /><BookmarkLabel $ls={0.27}>Other bookmarks</BookmarkLabel></OtherBookmarks>
          </BookmarkBar>
          <Viewport>
            <Canvas>
              <Sheet>
                <Countdown>Contest Ends In: 6 days 23 hrs 43 mins 31 sec</Countdown>
                <TitleRow>
                  <Title>RANKS - <span>OCT16</span></Title>
                  <ScoreLink>Score Based Ranklist</ScoreLink>
                </TitleRow>
                <SocialRow>
                  <GPlus>G+1</GPlus>
                  <GCount>0</GCount>
                  <SocialButton $w={60} $bg="#1b95e0" $mr={28}><Bird />Tweet</SocialButton>
                  <SocialButton $w={51} $bg="#4267b2" $mr={4} $bold><Thumbs />Like</SocialButton>
                  <SocialButton $w={41} $bg="#4267b2" $mr={4} $bold>Share</SocialButton>
                  <SocialNote>Be the first of your friends to like this.</SocialNote>
                  <Fetched>Ranklist fetched a few seconds ago.<Refresh /></Fetched>
                </SocialRow>
                <Filters>
                  <Field $hint>Type to search &amp; press enter<Search /></Field>
                  <Field><Choice $pl={12}>25</Choice><Caret /></Field>
                  <Field $wide><Choice $pl={13}>Institution type</Choice><Caret /></Field>
                  <Field $hint><Clip>e.g. School, College, Organizati</Clip></Field>
                  <Apply>Apply</Apply>
                </Filters>
                <Summary>
                  <ActiveFilter>Institution : National Instit…<ClearIcon /></ActiveFilter>
                  <ItemCount>20 of 4191 item(s)</ItemCount>
                </Summary>
                <Table>
                  <HeadRow>
                    <HeadCell $pl={9}>
                      <svg width="7" height="11" viewBox="0 0 7 11"><path d="M.7 6 3.500 1 6.300 6z" fill="#7d7ddc" /></svg>#
                    </HeadCell>
                    <HeadCell $pl={5}><SortIcon />USER NAME</HeadCell>
                    {problems.map((p) => <HeadCell key={p}><SortIcon />{p}</HeadCell>)}
                  </HeadRow>
                  <BodyRows>
                    {entries.map((e) => (
                      <Row key={e.user} $mine={e.mine}>
                        <Cell $pl={3}>{e.rank}</Cell>
                        <UserCell><Flag />{e.user}<em>{e.inst}</em></UserCell>
                        {e.scores.map((s, i) => (
                          <Cell key={i} $link={i > 0 && s !== "-"}>{s}</Cell>
                        ))}
                      </Row>
                    ))}
                    <Row />
                  </BodyRows>
                </Table>
              </Sheet>
            </Canvas>
            <Scrollbar>
              <svg width="7" height="4" viewBox="0 0 7 4"><path d="M0 4 3.500 0 7 4z" fill="#505050" /></svg>
              <Thumb />
              <svg width="7" height="4" viewBox="0 0 7 4"><path d="M0 0h7L3.500 4z" fill="#505050" /></svg>
            </Scrollbar>
          </Viewport>
        </Browser>
      </Body>
    </Desktop>
  );
}
